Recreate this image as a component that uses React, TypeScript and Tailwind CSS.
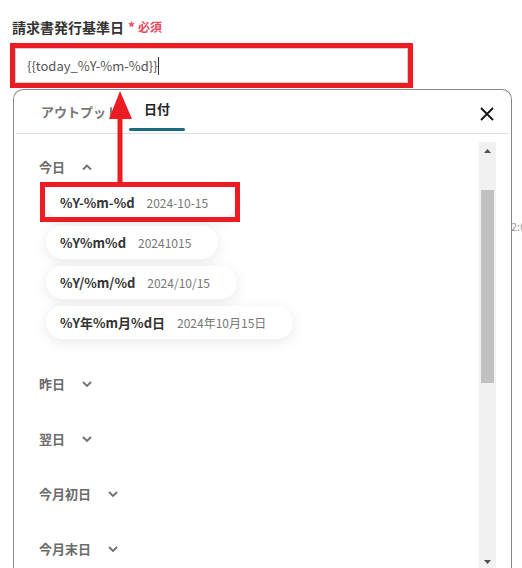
import React from 'react';

const RED = '#ec1c24';

type ChipProps = {
  format: string;
  sample: string;
  marked?: boolean;
};

const Chip: React.FC<ChipProps> = ({ format, sample, marked }) => {
  return (
    <div className="relative self-start">
      <div className="flex items-center h-[33px] pl-[14px] pr-[27px] rounded-full bg-white shadow-[0_3px_14px_rgba(0,0,0,0.09)]">
        <span className="text-[13px] font-bold text-[#333]">{format}</span>
        <span className="ml-[12px] text-[12px] text-[#777]">{sample}</span>
      </div>
      {marked && (
        <div className="absolute -left-[6px] -right-[5px] -top-[4px] -bottom-[3px] border-[5px] border-[#ec1c24]" />
      )}
    </div>
  );
};

const Chevron: React.FC<{ up?: boolean }> = ({ up }) => (
  <svg width="12" height="8" viewBox="0 0 12 8" className="ml-[16px]">
    <path
      d={up ? 'M2 6.5 L6 2.5 L10 6.5' : 'M2 2 L6 6 L10 2'}
      fill="none"
      stroke="#707070"
      strokeWidth="1.8"
    />
  </svg>
);

const Heading: React.FC<{ label: string; up?: boolean }> = ({ label, up }) => (
  <div className="flex items-center h-[20px]">
    <span className="text-[13px] font-bold text-[#6b6b6b]">{label}</span>
    <Chevron up={up} />
  </div>
);

const App: React.FC = () => {
  return (
    <div
      className="relative w-[522px] h-[568px] overflow-hidden bg-white"
      style={{ fontFamily: '"Noto Sans CJK JP", "Noto Sans", sans-serif' }}
    >
      {/* label */}
      <div className="flex items-center pl-[12px] pt-[17px] h-[37px]">
        <span className="text-[14px] font-bold text-[#333]">請求書発行基準日</span>
        <span className="ml-[4px] text-[14px] font-bold text-[#e84a5f]">*</span>
        <span className="ml-[3px] text-[12px] font-bold text-[#e84a5f]">必須</span>
      </div>

      {/* input with red highlight */}
      <div className="ml-[10px] mt-[6px] w-[403px] h-[45px] border-[5px] border-[#ec1c24]">
        <div className="h-full border border-[#cfcfcf] flex items-center pl-[11px]">
          <span className="text-[13px] text-[#555]">{'{{today_%Y-%m-%d}}'}</span>
          <span className="w-px h-[18px] bg-[#333]" />
        </div>
      </div>

      {/* popup panel */}
      <div className="ml-[13px] mt-px w-[499px] h-[500px] border border-b-0 border-[#888] rounded-t-[10px] bg-white flex flex-col">
        <div className="relative flex items-end h-[44px] border-b border-[#e0e0e0] mx-[2px]">
          <div className="flex items-center h-full pl-[25px]">
            <span className="text-[13px] font-bold text-[#777]">アウトプット</span>
          </div>
          <div className="ml-[10px] w-[56px] h-full flex flex-col items-center">
            <span className="flex-1 flex items-center text-[13px] font-bold text-[#222]">日付</span>
            <span className="w-full h-[3px] mb-[2px] rounded-full bg-[#1a6b80]" />
          </div>
          <svg width="16" height="16" viewBox="0 0 16 16" className="absolute right-[14px] top-[16px]">
            <path d="M2 2 L14 14 M14 2 L2 14" stroke="#111" strokeWidth="1.8" />
          </svg>
        </div>

        <div className="flex flex-1">
          <div className="flex-1 flex flex-col pl-[25px] pt-[23px]">
            <Heading label="今日" up />
            <div className="flex flex-col gap-[7px] mt-[9px] pl-[7px]">
              <Chip format="%Y-%m-%d" sample="2024-10-15" marked />
              <Chip format="%Y%m%d" sample="20241015" />
              <Chip format="%Y/%m/%d" sample="2024/10/15" />
              <Chip format="%Y年%m月%d日" sample="2024年10月15日" />
            </div>
            <div className="flex flex-col gap-[35px] mt-[35px]">
              <Heading label="昨日" />
              <Heading label="翌日" />
              <Heading label="今月初日" />
              <Heading label="今月末日" />
            </div>
          </div>

          {/* scrollbar */}
          <div className="mt-[8px] mr-[15px] w-[17px] bg-[#f1f1f1] flex flex-col items-center">
            <svg width="9" height="6" viewBox="0 0 9 6" className="mt-[6px]">
              <path d="M4.5 1 L8 5 L1 5 Z" fill="#505050" />
            </svg>
            <div className="mt-[36px] w-[13px] h-[193px] bg-[#c1c1c1]" />
          </div>
        </div>
      </div>

      {/* down arrow of scrollbar */}
      <svg width="9" height="6" viewBox="0 0 9 6" className="absolute left-[483px] top-[559px]">
        <path d="M1 1 L8 1 L4.5 5 Z" fill="#505050" />
      </svg>

      <span className="absolute left-[511px] top-[218px] text-[11px] text-[#999]">2:0</span>

      {/* red annotation arrow */}
      <svg width="30" height="100" viewBox="0 0 30 100" className="absolute left-[105px] top-[88px]">
        <path d="M15 3 L4 31 L27 31 Z" fill={RED} />
        <rect x="12.5" y="29" width="5" height="66" fill={RED} />
      </svg>
    </div>
  );
};

export default App;
